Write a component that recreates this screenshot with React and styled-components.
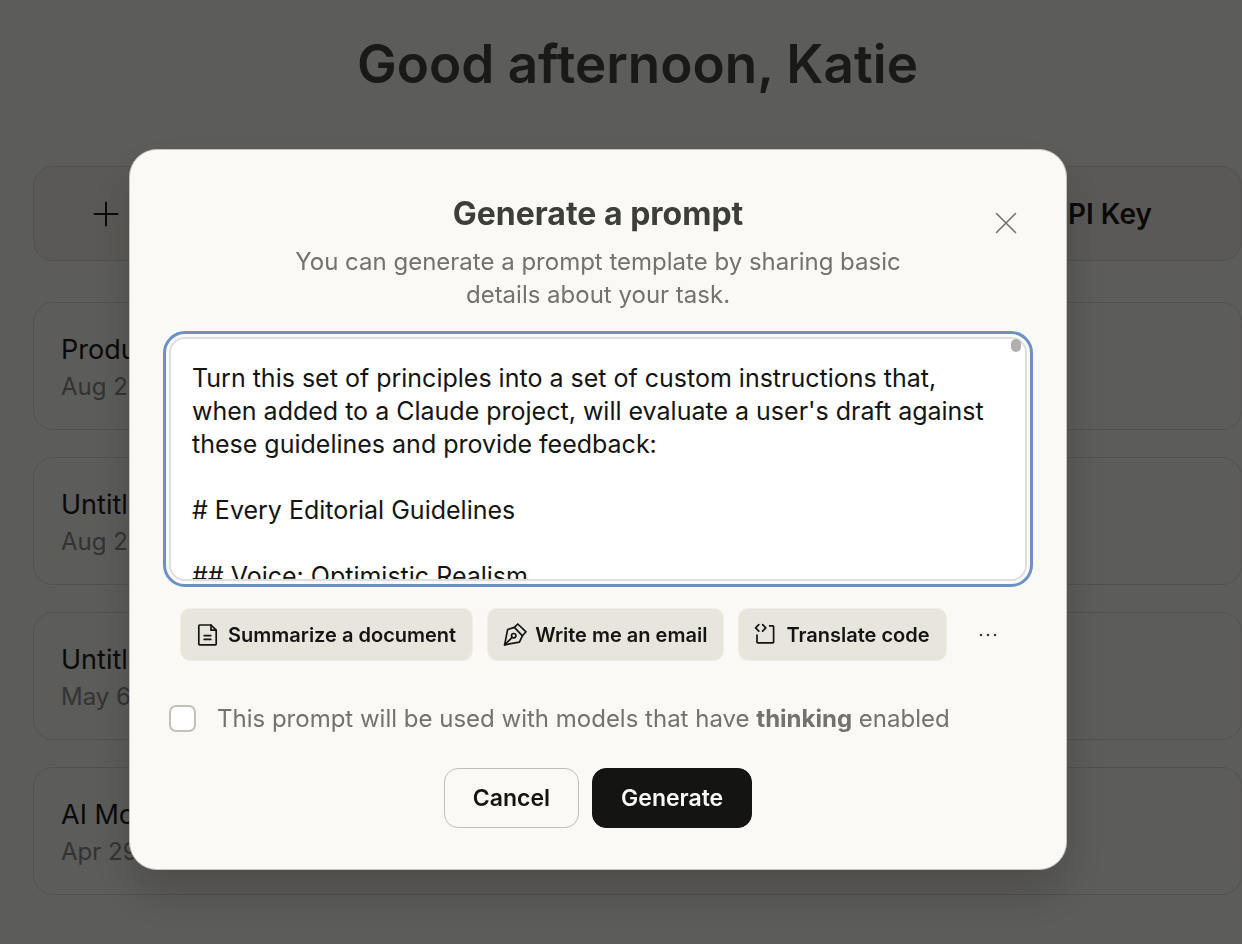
import React, { useState } from "react";
import styled, { createGlobalStyle } from "styled-components";

const GlobalStyle = createGlobalStyle`
  * {
    box-sizing: border-box;
  }
  body {
    margin: 0;
    background: #faf9f5;
    font-family: Inter, "Liberation Sans", sans-serif;
    color: #141413;
  }
  button,
  textarea {
    font-family: inherit;
  }
  h1,
  h2,
  h3,
  p {
    margin: 0;
  }
`;

/* ---------- page ---------- */

const Page = styled.main`
  min-height: 100vh;
  padding: 30px 0 48px 33px;
`;
const Greeting = styled.h1`
  margin-bottom: 68px;
  font-size: 53px;
  font-weight: 600;
  line-height: 68px;
  text-align: center;
  color: #444440;
`;
const Actions = styled.div`
  display: grid;
  grid-template-columns: repeat(3, 1fr);
  gap: 27px;
  margin-bottom: 41px;
`;
const ActionButton = styled.button`
  grid-column: ${({ $column }) => $column};
  display: flex;
  align-items: center;
  justify-content: center;
  gap: 20px;
  height: 95px;
  border: 1px solid #dedcd5;
  border-radius: 20px;
  background: #f5f2ec;
  color: #1c1c1b;
  font-size: 28px;
  font-weight: 600;
`;
const PromptList = styled.div`
  display: flex;
  flex-direction: column;
  gap: 27px;
`;
const PromptCard = styled.article`
  padding: 28px 27px 24px;
  border: 1px solid #dedcd5;
  border-radius: 20px;
`;
const PromptName = styled.h3`
  font-size: 27px;
  font-weight: 400;
  line-height: 38px;
  color: #1c1c1b;
`;
const PromptDate = styled.p`
  font-size: 24px;
  line-height: 36px;
  color: #8c8b86;
`;

/* ---------- modal ---------- */

const Overlay = styled.div`
  position: fixed;
  inset: 0;
  display: flex;
  align-items: flex-start;
  justify-content: center;
  padding: 149px 46px 0 0;
  background: rgba(0, 0, 0, 0.63);
`;
const Modal = styled.section`
  width: 100%;
  max-width: 938px;
  padding: 46px 39px 41px;
  border: 1px solid #c4c3bf;
  border-radius: 28px;
  background: #faf9f5;
  box-shadow: 0 24px 48px rgba(0, 0, 0, 0.18);
`;
const Header = styled.header`
  display: grid;
  grid-template-columns: 42px 1fr 42px;
  margin-bottom: 26px;
`;
const Heading = styled.div`
  grid-column: 2;
  justify-self: center;
  max-width: 660px;
  text-align: center;
`;
const Title = styled.h2`
  margin-bottom: 13px;
  font-size: 32px;
  font-weight: 700;
  line-height: 36px;
  color: #3d3d3a;
`;
const Subtitle = styled.p`
  font-size: 24px;
  line-height: 33px;
  color: #73726c;
`;
const IconButton = styled.button`
  display: flex;
  align-items: center;
  justify-content: center;
  width: ${({ $wide }) => ($wide ? "54px" : "42px")};
  height: 53px;
  padding: 0;
  border: none;
  background: none;
  color: ${({ $wide }) => ($wide ? "#3d3d3a" : "#73726c")};
  cursor: pointer;
`;
const TaskField = styled.div`
  position: relative;
  display: flex;
`;
const TaskInput = styled.textarea`
  width: 100%;
  height: 244px;
  padding: 23px 28px 20px 21px;
  border: 2px solid #dededc;
  border-radius: 16px;
  outline: 3px solid #6c91c7;
  outline-offset: 3px;
  background: #fff;
  color: #141413;
  font-size: 25px;
  line-height: 33px;
  resize: none;
  scrollbar-width: none;
`;
const ScrollThumb = styled.span`
  position: absolute;
  top: 2px;
  right: 6px;
  width: 10px;
  height: 13px;
  border-radius: 5px;
  background: #b0b0b0;
`;
const Chips = styled.div`
  display: flex;
  align-items: center;
  gap: 14px;
  margin: 27px 0 41px;
  padding-left: 11px;
`;
const Chip = styled.button`
  display: flex;
  align-items: center;
  gap: 8px;
  height: 53px;
  padding: 0 16px 0 15px;
  border: 1px solid #f0eee6;
  border-radius: 10px;
  background: #e8e6dc;
  color: #141413;
  font-size: 20px;
  font-weight: 600;
  white-space: nowrap;
  cursor: pointer;
`;
const ThinkingLabel = styled.label`
  display: flex;
  align-items: center;
  gap: 21px;
  margin-bottom: 33px;
  font-size: 24px;
  line-height: 33px;
  color: #73726c;
`;
const Checkbox = styled.input`
  appearance: none;
  flex: none;
  width: 27px;
  height: 27px;
  margin: 0;
  border: 2px solid #c2c1bd;
  border-radius: 7px;
  background: #fff;
  &:checked {
    background: #141413;
  }
`;
const Footer = styled.footer`
  display: flex;
  justify-content: center;
  gap: 13px;
`;
const Btn = styled.button`
  height: 60px;
  padding: 0 28px;
  border: 1px solid ${({ $primary }) => ($primary ? "#141413" : "#bfbeba")};
  border-radius: 14px;
  background: ${({ $primary }) => ($primary ? "#141413" : "transparent")};
  color: ${({ $primary }) => ($primary ? "#faf9f5" : "#141413")};
  font-size: 23px;
  font-weight: 600;
  cursor: pointer;
`;

/* ---------- icons ---------- */

const Icon = ({ size = 24, stroke = 2, children }) => (
  <svg
    width={size}
    height={size}
    viewBox={`0 0 ${size} ${size}`}
    fill="none"
    stroke="currentColor"
    strokeWidth={stroke}
    strokeLinecap="round"
    strokeLinejoin="round"
    aria-hidden="true"
  >
    {children}
  </svg>
);
const PlusIcon = () => (
  <Icon size={26}>
    <path d="M13 1.500v23M1.500 13h23" />
  </Icon>
);
const KeyIcon = () => (
  <Icon size={26}>
    <circle cx="8" cy="18" r="6" />
    <path d="M12.500 13.500 23 3M18 8l4 4" />
  </Icon>
);
const CloseIcon = () => (
  <Icon size={22} stroke={1.6}>
    <path d="M1.500 1.500l19 19M20.500 1.500l-19 19" />
  </Icon>
);
const DocumentIcon = () => (
  <Icon stroke={1.7}>
    <path d="M3.600 2h11.400l5.200 5.200v13.900a.8.8 0 0 1-.8.8H3.600a.8.8 0 0 1-.8-.8V2.800a.8.8 0 0 1 .8-.8z" />
    <path d="M15 2v5.200h5.200M8.200 12.600h6.600M8.200 16.400h6.600" />
  </Icon>
);
const PenIcon = () => (
  <Icon stroke={1.7}>
    <path d="M14.800 1l8.200 7.800-3.600 4-8-8.400z" />
    <path d="M11.400 4.400L4.600 6.600 1.600 21.800l14.800-2.600 3-6.400" />
    <path d="M1.600 21.800l7.600-7.400" />
    <circle cx="10.700" cy="12.700" r="2.200" />
  </Icon>
);
const CodeIcon = () => (
  <Icon stroke={1.7}>
    <path d="M4.800 1.600L1.600 4.900l3.200 3.300M8.600 1.600l3.200 3.300-3.200 3.300" />
    <path d="M15.600 2.800h3.200a.8.8 0 0 1 .8.8V19a.8.8 0 0 1-.8.8H3.800a.8.8 0 0 1-.8-.8v-7" />
  </Icon>
);
const DotsIcon = () => (
  <Icon size={22}>
    <g fill="currentColor" stroke="none">
      <circle cx="4" cy="11" r="1.300" />
      <circle cx="11" cy="11" r="1.300" />
      <circle cx="18" cy="11" r="1.300" />
    </g>
  </Icon>
);

const prompts = [
  { name: "Product", date: "Aug 27" },
  { name: "Untitled", date: "Aug 21" },
  { name: "Untitled", date: "May 6" },
  { name: "AI Model", date: "Apr 29" },
];

const examples = [
  { label: "Summarize a document", icon: <DocumentIcon /> },
  { label: "Write me an email", icon: <PenIcon /> },
  { label: "Translate code", icon: <CodeIcon /> },
];

const initialTask = `Turn this set of principles into a set of custom instructions that, when added to a Claude project, will evaluate a user's draft against these guidelines and provide feedback:

# Every Editorial Guidelines

## Voice: Optimistic Realism
`;

const GenerateModal = () => {
  const [task, setTask] = useState(initialTask);
  const [thinking, setThinking] = useState(false);

  return (
    <Overlay>
      <Modal role="dialog" aria-modal="true" aria-labelledby="modal-title">
        <Header>
          <Heading>
            <Title id="modal-title">Generate a prompt</Title>
            <Subtitle>
              You can generate a prompt template by sharing basic details about
              your task.
            </Subtitle>
          </Heading>
          <IconButton type="button" aria-label="Close">
            <CloseIcon />
          </IconButton>
        </Header>
        <TaskField>
          <TaskInput
            aria-label="Task"
            spellCheck={false}
            value={task}
            onChange={(e) => setTask(e.target.value)}
          />
          <ScrollThumb />
        </TaskField>
        <Chips>
          {examples.map(({ label, icon }) => (
            <Chip key={label} type="button">
              {icon}
              {label}
            </Chip>
          ))}
          <IconButton type="button" aria-label="More" $wide>
            <DotsIcon />
          </IconButton>
        </Chips>
        <ThinkingLabel>
          <Checkbox
            type="checkbox"
            checked={thinking}
            onChange={(e) => setThinking(e.target.checked)}
          />
          <span>
            This prompt will be used with models that have <b>thinking</b>{" "}
            enabled
          </span>
        </ThinkingLabel>
        <Footer>
          <Btn type="button">Cancel</Btn>
          <Btn type="button" $primary>
            Generate
          </Btn>
        </Footer>
      </Modal>
    </Overlay>
  );
};

const App = () => (
  <>
    <GlobalStyle />
    <Page>
      <Greeting>Good afternoon, Katie</Greeting>
      <Actions>
        <ActionButton $column={1}>
          <PlusIcon />
          Create a Prompt
        </ActionButton>
        <ActionButton $column={3}>
          <KeyIcon />
          Get API Key
        </ActionButton>
      </Actions>
      <PromptList>
        {prompts.map((prompt, i) => (
          <PromptCard key={i + "prompt"}>
            <PromptName>{prompt.name}</PromptName>
            <PromptDate>{prompt.date}</PromptDate>
          </PromptCard>
        ))}
      </PromptList>
    </Page>
    <GenerateModal />
  </>
);

export default App;
